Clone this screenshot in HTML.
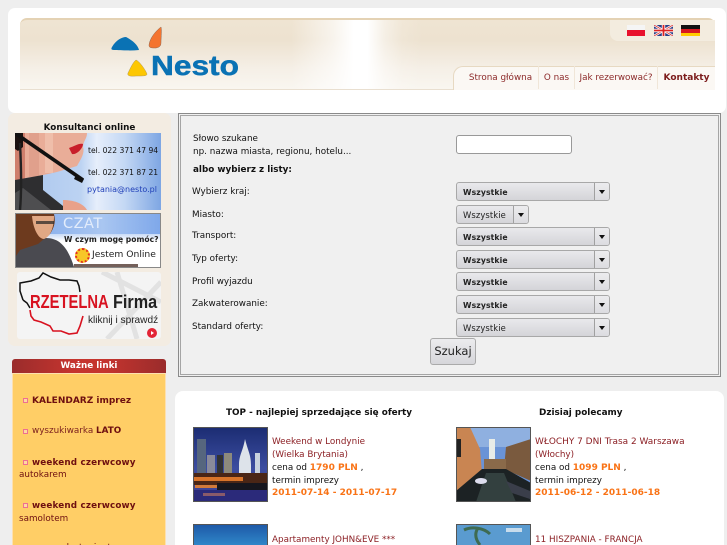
<!DOCTYPE html>
<html><head><meta charset="utf-8">
<style>
html,body{margin:0;padding:0;width:727px;height:545px;overflow:hidden;background:#eee;}
body{position:relative;font-family:"DejaVu Sans",sans-serif;font-size:8.8px;color:#111;}
.a,.t{position:absolute;}
.t{white-space:nowrap;line-height:13px;}
.sel{position:absolute;left:456px;width:154px;height:19px;box-sizing:border-box;border:1px solid #a8a8a8;border-radius:3px;background:linear-gradient(#e9e9ec,#d4d4d8);font-size:7.7px;line-height:19px;padding-left:6px;color:#222;font-weight:bold;letter-spacing:.1px;}
.sel.n{font-weight:normal;font-size:8.4px;}
.sel i{position:absolute;right:0;top:0;width:14px;height:17px;border-left:1px solid #a0a0a0;background:linear-gradient(#ececee,#dcdce0);border-radius:0 2px 2px 0;}
.sel i:after{content:"";position:absolute;left:4px;top:7px;border:3px solid transparent;border-top:4px solid #111;border-bottom:0;}
.l{color:#8c2025;}
.o{color:#f97316;font-weight:bold;font-size:9px;}
.nav{position:absolute;top:66px;height:23px;line-height:24px;color:#8c2a2a;font-size:8.8px;white-space:nowrap;text-align:center;border-right:1px solid #f0e6d8;}
.b{position:absolute;width:5px;height:5px;box-sizing:border-box;border:1.5px solid #ee6f92;background:#ffd9a0;}
</style></head><body>

<div class="a" style="left:8px;top:8px;width:718px;height:105px;background:#fff;border-radius:7px;"></div>
<div class="a" style="left:20px;top:18px;width:695px;height:72px;border-radius:7px 7px 0 0;border-top:2px solid #e4d2b4;box-sizing:border-box;border-bottom:1px solid #e9dfd0;background:linear-gradient(90deg,rgba(255,255,255,0) 39%,rgba(255,255,255,.6) 45%,#fff 48%,#fff 50%,rgba(255,255,255,.45) 52.5%,rgba(255,255,255,.12) 55%,rgba(255,255,255,0) 58%),linear-gradient(#efe4d2,#ede2d0 30%,#f5efe6 70%,#f9f6f0);"></div>
<div class="a" style="left:610px;top:20px;width:105px;height:21px;background:#f3ecdf;border-radius:0 0 0 8px;"></div>

<svg class="a" style="left:100px;top:20px;" width="60" height="65" viewBox="0 0 60 65">
<path d="M12 27C16 20 22 17 26 17C32 20 38 25 39 30C30 31 20 30 14 30C11 30 11 29 12 27Z" fill="#0a72b4"/>
<path d="M28 53C30 49 33 42 36 40C39 41 45 49 47 54C47 56 44 56 36 56C30 56.5 27 56 28 53Z" fill="#fdc702" stroke="#b59a5a" stroke-width=".5"/>
</svg>
<svg class="a" style="left:148px;top:20px;" width="14" height="30" viewBox="0 0 14 30"><path d="M13 7C9 10 2 17 1 25C1 28 3 28 8 28C12 27 13 26 13 22C13 17 14 10 13 7Z" fill="#f4742f" stroke="#8d6a57" stroke-width=".5"/></svg>
<div class="t" style="left:151px;top:50px;font:bold 28px/32px 'Liberation Sans',sans-serif;color:#0a72b4;transform:scaleX(1.13);transform-origin:left;-webkit-text-stroke:.5px #0a72b4;">Nesto</div>

<div class="a" style="left:627px;top:25px;width:18px;height:5px;background:#f5f5f5;"></div>
<div class="a" style="left:627px;top:30px;width:18px;height:6px;background:#e8112d;"></div>
<svg class="a" style="left:654px;top:25px;" width="19" height="11" viewBox="0 0 19 11"><rect width="19" height="11" fill="#2a3f86"/><path d="M0 0L19 11M19 0L0 11" stroke="#fff" stroke-width="2.4"/><path d="M0 0L19 11M19 0L0 11" stroke="#d33" stroke-width=".8"/><path d="M9.5 0V11M0 5.5H19" stroke="#fff" stroke-width="3.4"/><path d="M9.5 0V11M0 5.5H19" stroke="#d22" stroke-width="1.8"/></svg>
<div class="a" style="left:681px;top:25px;width:19px;height:4px;background:#111;"></div>
<div class="a" style="left:681px;top:29px;width:19px;height:4px;background:#d8181f;"></div>
<div class="a" style="left:681px;top:33px;width:19px;height:3px;background:#fc0;"></div>

<div class="a" style="left:453px;top:66px;width:262px;height:24px;background:#fbf8f4;border-radius:10px 0 0 0;border-top:1px solid #e7d9c2;border-left:1px solid #e7d9c2;box-sizing:border-box;"></div>
<div class="nav" style="left:463px;width:75px;">Strona główna</div>
<div class="nav" style="left:539px;width:35px;">O nas</div>
<div class="nav" style="left:575px;width:82px;">Jak rezerwować?</div>
<div class="nav" style="left:658px;width:57px;font-weight:bold;font-size:9px;border:0;color:#7c1c1c;">Kontakty</div>

<!-- sidebar -->
<div class="a" style="left:8px;top:113px;width:163px;height:233px;background:#f3ece2;border-radius:7px;"></div>
<div class="t" style="left:8px;width:163px;top:122px;text-align:center;font-weight:bold;">Konsultanci online</div>

<div class="a" style="left:15px;top:133px;width:146px;height:77px;overflow:hidden;background:linear-gradient(90deg,#a9c5ee 0,#bcd3f2 45%,#e6eefb 56%,#c4d8f4 75%,#7ea6e3 100%);">
<svg class="a" style="left:0;top:0" width="146" height="77" viewBox="0 0 146 77">
<path d="M0 0H72C72 6 68 8 68 14C70 20 66 26 62 33C52 36 40 40 28 42L0 47Z" fill="#e9ad98"/>
<path d="M0 0H10V47H0Z" fill="#cf7f6c"/><path d="M14 0H24V44H14Z" fill="#e0a08c"/><path d="M30 0H38V40H30Z" fill="#efbeaa"/>
<path d="M0 47L28 42V57L48 73V77H0Z" fill="#2e2e30"/>
<path d="M8 55L36 77H0V60Z" fill="#4e4e50"/>
<path d="M48 67C58 67 68 70 72 77H48Z" fill="#e9a18a"/>
<path d="M0 0H8V14L3 18L0 16Z" fill="#1b1210"/>
<path d="M0 0L68 47" stroke="#111" stroke-width="3.6" fill="none"/>
<path d="M61 42L69 46L67 50L59 46Z" fill="#111"/>
<path d="M5 10C6 30 7 55 5 77" stroke="#222" stroke-width="2.4" fill="none"/>
<path d="M54 15C60 13 64 10 68 11C68 15 62 22 57 21Z" fill="#c81e2a"/>
</svg>
<div class="t" style="left:73px;top:10.5px;font-size:7.6px;color:#111;">tel. 022 371 47 94</div>
<div class="t" style="left:73px;top:32.5px;font-size:7.6px;color:#111;">tel. 022 371 87 21</div>
<div class="t" style="left:72px;top:49.5px;font-size:8px;color:#1f3fb8;">pytania@nesto.pl</div>
</div>

<div class="a" style="left:15px;top:213px;width:146px;height:55px;box-sizing:border-box;border:1px solid #888;overflow:hidden;background:linear-gradient(90deg,#7fa8ea 0,#a9c6f1 60%,#7fa8ea 100%) no-repeat 0 0/100% 20px,linear-gradient(#c8daf6 20px,#fff 27px,#fff);">
<svg class="a" style="left:0;top:0" width="144" height="53" viewBox="0 0 144 53">
<path d="M0 24H30C44 24 52 34 58 53H0Z" fill="#4a4a50"/>
<path d="M0 0H38C40 8 38 14 34 20L22 30L4 36L0 42Z" fill="#6d3a1e"/>
<path d="M16 2H38C38 14 34 23 28 25C22 25 17 14 16 2Z" fill="#e1a884"/>
<rect x="20" y="7" width="18" height="3" fill="#222" opacity=".7"/>
<path d="M58 50H122V53H58Z" fill="#74605a"/>
</svg>
<div class="t" style="left:47px;top:4px;font-size:14.5px;color:#e3ecfb;letter-spacing:.5px;">CZAT</div>
<div class="t" style="left:48px;top:19px;font-size:7.6px;font-weight:bold;color:#222;">W czym mogę pomóc?</div>
<div class="a" style="left:59px;top:34px;width:11px;height:11px;border-radius:50%;background:#f7c627;border:2px dotted #e2311d;"></div>
<div class="t" style="left:76px;top:34px;font-size:9.2px;color:#222;">Jestem Online</div>
</div>

<div class="a" style="left:17px;top:272px;width:144px;height:67px;background:#f4f4f4;border-radius:3px;overflow:hidden;">
<svg class="a" style="left:0;top:0" width="144" height="67" viewBox="0 0 144 67">
<path d="M85 0L144 30M100 0L120 67M144 10L90 67" stroke="#e2e2e2" stroke-width="5" fill="none"/>
<path d="M6 28L3 19L3 11L14 9L22 6L26 1L34 5L43 8L52 8L60 9L62 14L63 20" fill="none" stroke="#111" stroke-width="1.5"/>
<path d="M6 28L10 31L13 36" fill="none" stroke="#111" stroke-width="1.5"/>
<path d="M13 38L14 44L17 48L24 50L33 54L36 59L44 59L52 62L60 61L63 54L66 44" fill="none" stroke="#d81220" stroke-width="1.6"/>
</svg>
<div class="t" style="left:13px;top:20px;font:bold 18px/20px 'Liberation Sans',sans-serif;color:#d81220;transform:scaleX(.82);transform-origin:left;">RZETELNA</div>
<div class="t" style="left:96px;top:20px;font:bold 18px/20px 'Liberation Sans',sans-serif;color:#222;transform:scaleX(.9);transform-origin:left;">Firma</div>
<div class="t" style="left:71px;top:42px;font:10.1px/13px 'Liberation Sans',sans-serif;color:#222;">kliknij i sprawdź</div>
<div class="a" style="left:130px;top:56px;width:10px;height:10px;border-radius:50%;background:#e32436;"></div>
<div class="a" style="left:134px;top:59px;border-left:3px solid #fff;border-top:2px solid transparent;border-bottom:2px solid transparent;"></div>
</div>

<!-- links -->
<div class="a" style="left:12px;top:359px;width:154px;height:14px;background:linear-gradient(90deg,#9a2c2c,#c5342e 40%,#c5342e 60%,#9a2c2c);border-radius:3px 3px 0 0;"></div>
<div class="t" style="left:12px;width:154px;top:360px;text-align:center;color:#fff;font-weight:bold;">Ważne linki</div>
<div class="a" style="left:12px;top:373px;width:154px;height:172px;box-sizing:border-box;background:#ffce66;border:1px solid #fde0b0;border-bottom:0;"></div>
<div class="b" style="left:23px;top:398px;"></div>
<div class="t" style="left:32px;top:395px;font-weight:bold;font-size:9px;color:#6e0f10;">KALENDARZ imprez</div>
<div class="b" style="left:23px;top:429px;"></div>
<div class="t" style="left:32px;top:425px;color:#7a1e1e;">wyszukiwarka <b style="color:#6e0f10">LATO</b></div>
<div class="b" style="left:23px;top:460px;"></div>
<div class="t" style="left:32px;top:457px;font-weight:bold;font-size:8.8px;letter-spacing:.15px;color:#6e0f10;">weekend czerwcowy</div>
<div class="t" style="left:19px;top:469px;color:#6e0f10;">autokarem</div>
<div class="b" style="left:23px;top:503px;"></div>
<div class="t" style="left:32px;top:500px;font-weight:bold;font-size:8.8px;letter-spacing:.15px;color:#6e0f10;">weekend czerwcowy</div>
<div class="t" style="left:19px;top:513px;color:#6e0f10;">samolotem</div>
<div class="t" style="left:32px;top:542px;color:#6e0f10;">wczasy last minute</div>

<!-- search -->
<div class="a" style="left:178px;top:113px;width:543px;height:264px;box-sizing:border-box;border:1px solid #8a8a8a;padding:1px;background:#f0f0f0;box-shadow:inset 0 0 0 1px #f0f0f0,inset 0 0 0 2px #a5a5a5;"></div>
<div class="t" style="left:193px;top:133px;">Słowo szukane</div>
<div class="t" style="left:193px;top:146px;">np. nazwa miasta, regionu, hotelu...</div>
<div class="t" style="left:193px;top:164px;font-weight:bold;">albo wybierz z listy:</div>
<div class="t" style="left:192px;top:186px;">Wybierz kraj:</div>
<div class="t" style="left:192px;top:209px;">Miasto:</div>
<div class="t" style="left:192px;top:230px;">Transport:</div>
<div class="t" style="left:192px;top:253px;">Typ oferty:</div>
<div class="t" style="left:192px;top:276px;">Profil wyjazdu</div>
<div class="t" style="left:192px;top:298px;">Zakwaterowanie:</div>
<div class="t" style="left:192px;top:321px;">Standard oferty:</div>

<div class="a" style="left:456px;top:135px;width:116px;height:19px;box-sizing:border-box;background:#fff;border:1px solid #999;border-radius:3px;"></div>
<div class="sel" style="top:182px;">Wszystkie<i></i></div>
<div class="sel n" style="top:205px;width:73px;">Wszystkie<i></i></div>
<div class="sel" style="top:227px;">Wszystkie<i></i></div>
<div class="sel" style="top:250px;">Wszystkie<i></i></div>
<div class="sel" style="top:272px;">Wszystkie<i></i></div>
<div class="sel" style="top:295px;">Wszystkie<i></i></div>
<div class="sel n" style="top:318px;">Wszystkie<i></i></div>
<div class="a" style="left:430px;top:338px;width:46px;height:27px;box-sizing:border-box;background:linear-gradient(#ececee,#d6d6da);border:1px solid #aaa;border-radius:3px;text-align:center;font:11.5px/25px 'DejaVu Sans',sans-serif;color:#222;">Szukaj</div>

<!-- offers -->
<div class="a" style="left:175px;top:391px;width:549px;height:154px;background:#fff;border-radius:8px 8px 0 0;"></div>
<div class="t" style="left:226px;top:407px;font-weight:bold;font-size:8.85px;color:#111;">TOP - najlepiej sprzedające się oferty</div>
<div class="t" style="left:539px;top:407px;font-weight:bold;font-size:8.85px;color:#111;">Dzisiaj polecamy</div>

<svg class="a" style="left:193px;top:427px;" width="75" height="75" viewBox="0 0 75 75">
<defs><linearGradient id="g1" x1="0" y1="0" x2="0" y2="1"><stop offset="0" stop-color="#1b2c72"/><stop offset=".55" stop-color="#3c4da0"/><stop offset="1" stop-color="#3e3f90"/></linearGradient></defs>
<rect width="75" height="75" fill="url(#g1)"/>
<rect x="4" y="12" width="9" height="36" fill="#56667e"/><rect x="14" y="28" width="8" height="20" fill="#8a8a9a"/><rect x="24" y="28" width="6" height="20" fill="#333"/><rect x="31" y="26" width="8" height="24" fill="#8d8a7c"/>
<path d="M46 38C46 28 50 24 52 12C55 24 58 28 58 38V46H46Z" fill="#dde3ea"/><rect x="62" y="26" width="5" height="20" fill="#c8d2de"/>
<rect x="0" y="46" width="75" height="12" fill="#4a2616"/><rect x="0" y="50" width="50" height="4" fill="#d8742a"/>
<rect x="2" y="58" width="30" height="3" fill="#d27a3a"/><rect x="24" y="56" width="50" height="7" fill="#16161e"/><rect x="0" y="63" width="75" height="12" fill="#2b2a7a"/><rect x="10" y="66" width="22" height="3" fill="#8a5a6a"/>
<rect x=".5" y=".5" width="74" height="74" fill="none" stroke="#555"/>
</svg>
<svg class="a" style="left:456px;top:427px;" width="75" height="75" viewBox="0 0 75 75">
<rect width="75" height="75" fill="#6a93d6"/><rect y="0" width="75" height="20" fill="#8fb0e0"/>
<path d="M0 0H14L24 22L26 46L0 64Z" fill="#c98552"/><rect x="0" y="12" width="5" height="18" fill="#222"/>
<rect x="33" y="12" width="6" height="26" fill="#e8ece8"/>
<path d="M50 20L75 12V54L48 42Z" fill="#7a5a3e"/><rect x="28" y="32" width="22" height="12" fill="#8a6a4a"/>
<path d="M0 64L26 42H50L75 56V75H0Z" fill="#1c2224"/><path d="M30 46H48L60 75H20Z" fill="#33403f"/>
<ellipse cx="25" cy="54" rx="6" ry="3" fill="#dde"/><path d="M50 54L74 64V72L56 66Z" fill="#3a3e4a"/><rect x=".5" y=".5" width="74" height="74" fill="none" stroke="#555"/>
</svg>
<div class="a" style="left:193px;top:524px;width:75px;height:21px;box-sizing:border-box;border:1px solid #555;border-bottom:0;background:linear-gradient(#1e5aa8,#2f86c8);"></div>
<svg class="a" style="left:456px;top:524px;" width="75" height="21" viewBox="0 0 75 21"><rect width="75" height="21" fill="#5a9bd0"/><path d="M8 6C16 2 28 4 34 10M22 4C18 10 20 16 24 21" stroke="#3e6b52" stroke-width="3" fill="none"/><rect x="50" y="4" width="16" height="4" fill="#c8dcec"/><rect x=".5" y=".5" width="74" height="21" fill="none" stroke="#555"/></svg>

<div class="t l" style="left:272px;top:436px;">Weekend w Londynie</div>
<div class="t l" style="left:272px;top:449px;">(Wielka Brytania)</div>
<div class="t" style="left:272px;top:462px;">cena od <span class="o">1790 PLN</span> ,</div>
<div class="t" style="left:272px;top:475px;">termin imprezy</div>
<div class="t o" style="left:272px;top:487px;">2011-07-14 - 2011-07-17</div>
<div class="t l" style="left:272px;top:534px;">Apartamenty JOHN&amp;EVE ***</div>

<div class="t l" style="left:535px;top:436px;font-size:8.95px;">WŁOCHY 7 DNI Trasa 2 Warszawa</div>
<div class="t l" style="left:535px;top:449px;">(Włochy)</div>
<div class="t" style="left:535px;top:462px;">cena od <span class="o">1099 PLN</span> ,</div>
<div class="t" style="left:535px;top:475px;">termin imprezy</div>
<div class="t o" style="left:535px;top:487px;">2011-06-12 - 2011-06-18</div>
<div class="t l" style="left:535px;top:534px;">11 HISZPANIA - FRANCJA</div>

</body></html>
